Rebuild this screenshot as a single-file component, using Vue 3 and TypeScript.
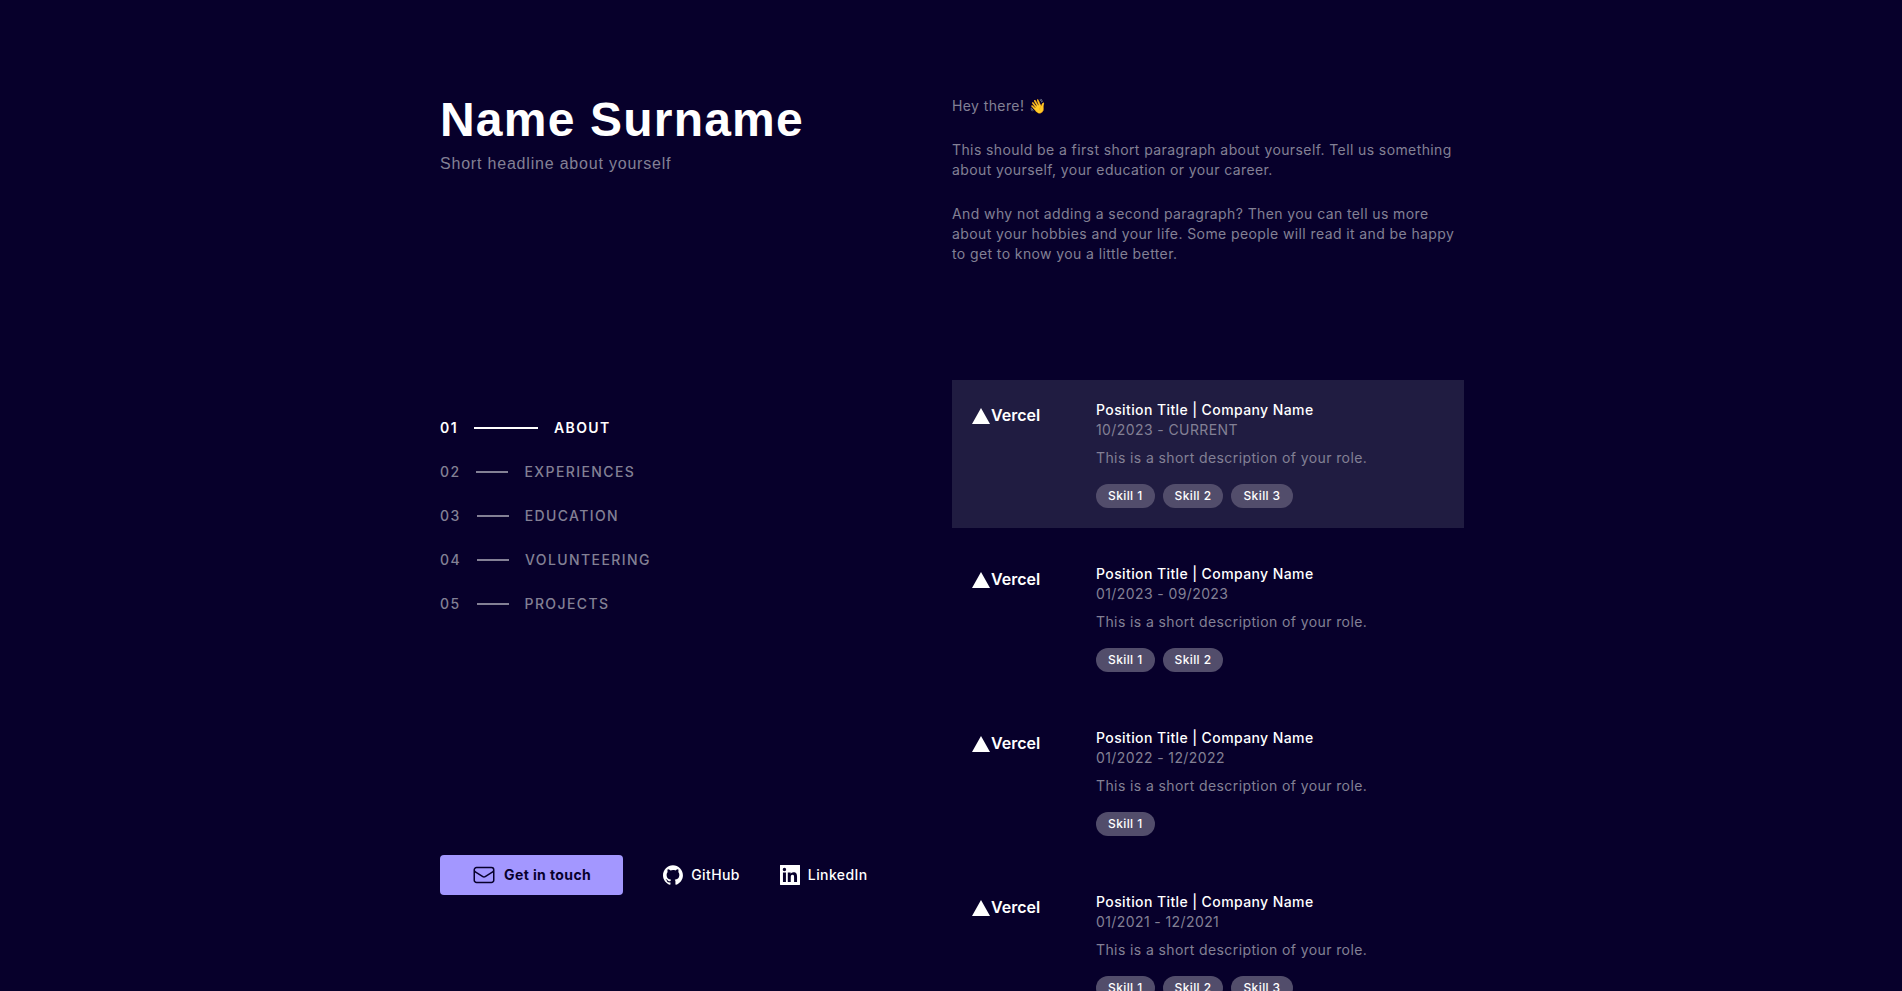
<script setup lang="ts">
import { ref } from 'vue'

interface Section {
  id: string
  label: string
}

interface Experience {
  period: string
  skills: number
}

const sections: Section[] = [
  { id: 'about', label: 'ABOUT' },
  { id: 'experiences', label: 'EXPERIENCES' },
  { id: 'education', label: 'EDUCATION' },
  { id: 'volunteering', label: 'VOLUNTEERING' },
  { id: 'projects', label: 'PROJECTS' },
]

const active = ref('about')

const experiences: Experience[] = [
  { period: '10/2023 - CURRENT', skills: 3 },
  { period: '01/2023 - 09/2023', skills: 2 },
  { period: '01/2022 - 12/2022', skills: 1 },
  { period: '01/2021 - 12/2021', skills: 3 },
]
</script>

<template>
  <div class="page">
    <header class="side">
      <div>
        <h1>Name Surname</h1>
        <p class="headline">Short headline about yourself</p>
      </div>

      <nav aria-label="Sections">
        <ul class="sections">
          <li v-for="(section, i) in sections" :key="section.id">
            <a
              :href="'#' + section.id"
              class="section-link"
              :class="{ active: active === section.id }"
              @click="active = section.id"
            >
              <span>0{{ i + 1 }}</span>
              <span class="dash"></span>
              <span>{{ section.label }}</span>
            </a>
          </li>
        </ul>
      </nav>

      <div class="contact">
        <button type="button" class="cta">
          <svg width="24" height="24" viewBox="0 0 24 24" fill="none" stroke="currentColor" stroke-width="1.5" stroke-linecap="round" stroke-linejoin="round" aria-hidden="true">
            <path d="M21.75 6.75v10.5a2.25 2.25 0 0 1-2.25 2.25h-15a2.25 2.25 0 0 1-2.25-2.25V6.75m19.5 0A2.25 2.25 0 0 0 19.5 4.5h-15a2.25 2.25 0 0 0-2.25 2.25m19.5 0v.243a2.25 2.25 0 0 1-1.07 1.916l-7.5 4.615a2.25 2.25 0 0 1-2.36 0L3.32 8.91a2.25 2.25 0 0 1-1.07-1.916V6.75" />
          </svg>
          Get in touch
        </button>
        <a href="#github" class="social">
          <svg width="20" height="20" viewBox="0 0 98 96" fill="currentColor" aria-hidden="true">
            <path fill-rule="evenodd" clip-rule="evenodd" d="M48.854 0C21.839 0 0 22 0 49.217c0 21.756 13.993 40.172 33.405 46.69 2.427.49 3.316-1.059 3.316-2.362 0-1.141-.08-5.052-.08-9.127-13.59 2.934-16.42-5.867-16.42-5.867-2.184-5.704-5.42-7.17-5.42-7.17-4.448-3.015.324-3.015.324-3.015 4.934.326 7.523 5.052 7.523 5.052 4.367 7.496 11.404 5.378 14.235 4.074.404-3.178 1.699-5.378 3.074-6.6-10.839-1.141-22.243-5.378-22.243-24.283 0-5.378 1.94-9.778 5.014-13.2-.485-1.222-2.184-6.275.486-13.038 0 0 4.125-1.304 13.426 5.052a46.97 46.97 0 0 1 12.214-1.63c4.125 0 8.33.571 12.213 1.63 9.302-6.356 13.427-5.052 13.427-5.052 2.67 6.763.97 11.816.485 13.038 3.155 3.422 5.015 7.822 5.015 13.2 0 18.905-11.404 23.06-22.324 24.283 1.78 1.548 3.316 4.481 3.316 9.126 0 6.6-.08 11.897-.08 13.526 0 1.304.89 2.853 3.316 2.364 19.412-6.52 33.405-24.935 33.405-46.691C97.707 22 75.788 0 48.854 0z" />
          </svg>
          GitHub
        </a>
        <a href="#linkedin" class="social">
          <svg width="20" height="20" viewBox="0 0 24 24" fill="currentColor" aria-hidden="true">
            <path d="M20.447 20.452h-3.554v-5.569c0-1.328-.027-3.037-1.852-3.037-1.853 0-2.136 1.445-2.136 2.939v5.667H9.351V9h3.414v1.561h.046c.477-.9 1.637-1.85 3.37-1.85 3.601 0 4.267 2.37 4.267 5.455v6.286zM5.337 7.433a2.062 2.062 0 0 1-2.063-2.065 2.064 2.064 0 1 1 2.063 2.065zm1.782 13.019H3.555V9h3.564v11.452zM23.500 0H.500C.200 0 0 .200 0 .500v23c0 .300.200.500.500.500h23c.300 0 .500-.200.500-.500v-23c0-.300-.200-.500-.500-.500z" />
          </svg>
          LinkedIn
        </a>
      </div>
    </header>

    <main>
      <section class="intro">
        <p>Hey there! 👋</p>
        <p>This should be a first short paragraph about yourself. Tell us something about yourself, your education or your career.</p>
        <p>And why not adding a second paragraph? Then you can tell us more about your hobbies and your life. Some people will read it and be happy to get to know you a little better.</p>
      </section>

      <section class="jobs">
        <article v-for="(job, i) in experiences" :key="job.period" class="job" :class="{ current: i === 0 }">
          <svg class="logo" width="72" height="20" viewBox="0 0 72 20" fill="currentColor" role="img" aria-label="Vercel">
            <path d="M9 4l9 16H0z" />
            <text x="19" y="17" class="logo-text">Vercel</text>
          </svg>
          <div>
            <h2>Position Title | Company Name</h2>
            <p>{{ job.period }}</p>
            <p class="description">This is a short description of your role.</p>
            <ul class="skills">
              <li v-for="n in job.skills" :key="n">Skill {{ n }}</li>
            </ul>
          </div>
        </article>
      </section>
    </main>
  </div>
</template>

<style>
body {
  margin: 0;
  padding-left: 2px;
  height: 100vh;
  overflow: hidden;
  background: #07002b;
}
</style>

<style scoped>
.page {
  display: grid;
  grid-template-columns: 1fr 1fr;
  max-width: 1024px;
  height: 100vh;
  margin: 0 auto;
  color: #838095;
  font: 400 16px/20px Inter, "Liberation Sans", sans-serif;
  letter-spacing: 0.025em;
}

h1,
h2,
p,
ul {
  margin: 0;
  padding: 0;
}

ul {
  list-style: none;
}

a {
  color: inherit;
  text-decoration: none;
}

.side,
main {
  font-size: 14px;
}

.side {
  box-sizing: border-box;
  height: 100vh;
  padding: 96px 0;
  display: flex;
  flex-direction: column;
  justify-content: space-between;
}

h1 {
  margin-bottom: 8px;
  color: #fff;
  font: 700 48px/48px Arial, "Liberation Sans", sans-serif;
  letter-spacing: 0.025em;
}

.headline {
  font: 400 16px/24px Arial, "Liberation Sans", sans-serif;
  letter-spacing: 0.05em;
}

.sections {
  display: grid;
  gap: 24px;
}

.section-link {
  display: flex;
  align-items: center;
  gap: 16px;
  font-weight: 500;
  letter-spacing: 0.1em;
}

.dash {
  width: 32px;
  height: 2px;
  background: currentColor;
}

.active {
  color: #fff;
  font-weight: 600;
}

.active .dash {
  width: 64px;
}

.contact {
  display: flex;
  align-items: center;
  gap: 40px;
}

.cta,
.social {
  display: flex;
  align-items: center;
  gap: 8px;
  white-space: nowrap;
}

.cta {
  height: 40px;
  padding: 0 32px;
  border: 0;
  border-radius: 4px;
  background: #a397ff;
  color: #07002b;
  font: inherit;
  font-weight: 700;
  letter-spacing: inherit;
  cursor: pointer;
}

.social {
  color: #fff;
  font-weight: 500;
}

main {
  padding-top: 96px;
}

.intro {
  display: grid;
  gap: 24px;
  margin-bottom: 116px;
}

.jobs {
  display: grid;
  gap: 16px;
}

.job {
  display: grid;
  grid-template-columns: 1fr 3fr;
  column-gap: 8px;
  padding: 20px;
}

.current {
  background: #201c41;
}

.logo {
  color: #fff;
  margin-top: 4px;
}

.logo-text {
  font: 600 16px Inter, sans-serif;
  letter-spacing: 0;
}

h2 {
  color: #fff;
  font-size: 14px;
  line-height: 20px;
  font-weight: 500;
}

.description {
  margin: 8px 0 16px;
}

.skills {
  display: flex;
  gap: 8px;
}

.skills li {
  padding: 0 12px;
  border-radius: 12px;
  background: #524d6b;
  color: #fff;
  font-size: 12px;
  line-height: 24px;
  font-weight: 500;
}
</style>
